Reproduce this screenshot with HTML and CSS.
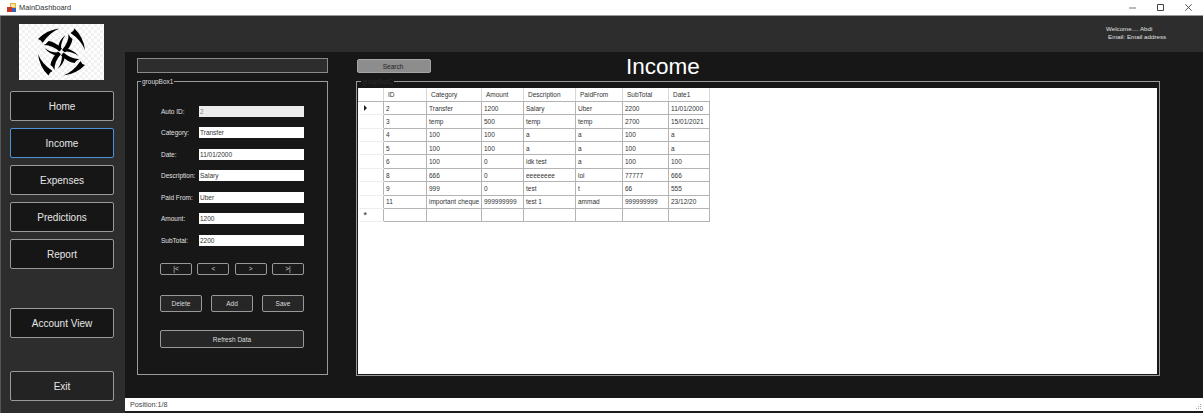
FILE: index.html
```html
<!doctype html>
<html>
	<head>
		<title>MainDashboard</title>
		<meta charset="utf-8" />
		<link rel="stylesheet" href="styles.css">
	</head>

	<body>
		<div class="titlebar">
			<svg class="app-icon" width="10" height="10" viewBox="0 0 10 10">
				<rect x="3" y="0" width="6" height="5" fill="#e8b23a"/>
				<rect x="4" y="1" width="4" height="3" fill="#f7e7a8"/>
				<rect x="0" y="4" width="5" height="5" fill="#c8362a"/>
				<rect x="5" y="5" width="4" height="4" fill="#3a62b8"/>
			</svg>
			<span class="title-text">MainDashboard</span>
			<div class="controls">
				<svg width="7" height="7" viewBox="0 0 7 7"><path d="M0 4H7" stroke="#777" fill="none"/></svg>
				<svg width="7" height="7" viewBox="0 0 7 7"><path d="M.5 .5H6.5V6.5H.5Z" stroke="#444" fill="none"/></svg>
				<svg width="7" height="7" viewBox="0 0 7 7"><path d="M.3 .3L6.7 6.7M6.7 .3L.3 6.7" stroke="#444" stroke-width=".9" fill="none"/></svg>
			</div>
		</div>

		<div class="window">
			<div class="sidebar">
				<div class="logo">
					<svg width="85" height="56" viewBox="-42.5 -28 85 56">
						<defs>
							<g id="blade">
								<path d="M-23.5 -13 Q-15 -22 -2 -23.5 Q-12 -19.5 -19 -9 Q-20 -12 -23.5 -13Z"/>
								<path d="M-18 -7 Q-10 -7.5 -2 -.5 L.5 -3.5 Q-6 -10 -13 -11 Q-15 -8 -18 -7Z"/>
								<path d="M4 -17 Q-2.5 -12 -3.5 -4 L-.5 -4 Q-.5 -11 4 -17Z"/>
							</g>
						</defs>
						<use href="#blade"/>
						<use href="#blade" transform="rotate(90)"/>
						<use href="#blade" transform="rotate(180)"/>
						<use href="#blade" transform="rotate(270)"/>
					</svg>
				</div>
				<div class="nav">
					<button class="nav-btn">Home</button>
					<button class="nav-btn active">Income</button>
					<button class="nav-btn">Expenses</button>
					<button class="nav-btn">Predictions</button>
					<button class="nav-btn">Report</button>
					<button class="nav-btn account">Account View</button>
					<button class="nav-btn exit">Exit</button>
				</div>
			</div>

			<div class="main">
				<div class="header">
					<div class="welcome">
						<div>Welcome.... Abdi</div>
						<div class="email">Email: Email address</div>
					</div>
				</div>

				<div class="content">
					<div class="left">
						<div class="search-box"></div>
						<div class="group group1">
							<div class="legend">groupBox1</div>
							<div class="form">
								<div class="row"><label>Auto ID:</label><div class="field disabled">2</div></div>
								<div class="row"><label>Category:</label><div class="field">Transfer</div></div>
								<div class="row"><label>Date:</label><div class="field">11/01/2000</div></div>
								<div class="row"><label>Description:</label><div class="field">Salary</div></div>
								<div class="row"><label>Paid From:</label><div class="field">Uber</div></div>
								<div class="row"><label>Amount:</label><div class="field">1200</div></div>
								<div class="row"><label>SubTotal:</label><div class="field">2200</div></div>
							</div>
							<div class="pager">
								<button class="btn">|&lt;</button>
								<button class="btn">&lt;</button>
								<button class="btn">&gt;</button>
								<button class="btn">&gt;|</button>
							</div>
							<div class="actions">
								<button class="btn">Delete</button>
								<button class="btn">Add</button>
								<button class="btn">Save</button>
							</div>
							<button class="btn refresh">Refresh Data</button>
						</div>
					</div>

					<div class="right">
						<div class="topline">
							<button class="search-btn">Search</button>
							<div class="page-title">Income</div>
						</div>
						<div class="group group2">
							<div class="legend">groupBox2</div>
							<div class="grid-area">
								<table class="grid">
									<colgroup>
										<col class="c0"><col class="c1"><col class="c2"><col class="c3"><col class="c4"><col class="c5"><col class="c6"><col class="c7">
									</colgroup>
									<tr class="head"><th></th><th>ID</th><th>Category</th><th>Amount</th><th>Description</th><th>PaidFrom</th><th>SubTotal</th><th>Date1</th></tr>
									<tr><td class="rh"><span class="arrow"></span></td><td>2</td><td>Transfer</td><td>1200</td><td>Salary</td><td>Uber</td><td>2200</td><td>11/01/2000</td></tr>
									<tr><td class="rh"></td><td>3</td><td>temp</td><td>500</td><td>temp</td><td>temp</td><td>2700</td><td>15/01/2021</td></tr>
									<tr><td class="rh"></td><td>4</td><td>100</td><td>100</td><td>a</td><td>a</td><td>100</td><td>a</td></tr>
									<tr><td class="rh"></td><td>5</td><td>100</td><td>100</td><td>a</td><td>a</td><td>100</td><td>a</td></tr>
									<tr><td class="rh"></td><td>6</td><td>100</td><td>0</td><td>idk test</td><td>a</td><td>100</td><td>100</td></tr>
									<tr><td class="rh"></td><td>8</td><td>666</td><td>0</td><td>eeeeeeee</td><td>lol</td><td>77777</td><td>666</td></tr>
									<tr><td class="rh"></td><td>9</td><td>999</td><td>0</td><td>test</td><td>t</td><td>66</td><td>555</td></tr>
									<tr><td class="rh"></td><td>11</td><td>important cheque</td><td>999999999</td><td>test 1</td><td>ammad</td><td>999999999</td><td>23/12/20</td></tr>
									<tr class="new"><td class="rh">*</td><td></td><td></td><td></td><td></td><td></td><td></td><td></td></tr>
								</table>
							</div>
						</div>
					</div>
				</div>

				<div class="status">
					<span>Position:1/8</span>
					<svg class="grip" width="8" height="8" viewBox="0 0 8 8"><path d="M6 1h1v1H6zM4 3h1v1H4zM6 3h1v1H6zM2 5h1v1H2zM4 5h1v1H4zM6 5h1v1H6z" fill="#aaa"/></svg>
				</div>
			</div>
		</div>
	</body>
</html>
```

FILE: styles.css
```css
*{
	margin:0;
	padding:0;
	box-sizing:border-box;
}

html, body{
	width:1203px;
	height:413px;
	overflow:hidden;
	background:#1c1c1c;
	font-family:"Liberation Sans", Arial, sans-serif;
}

button{
	font-family:"Liberation Sans", Arial, sans-serif;
	cursor:default;
}

/* title bar */
.titlebar{
	height:16px;
	background:#fff;
	display:flex;
	align-items:center;
	padding-left:7px;
	border-bottom:1px solid #9a9a9a;
}

.title-text{
	font-size:7.4px;
	color:#333;
	margin-left:2px;
}

.controls{
	margin-left:auto;
	display:flex;
	gap:21px;
	padding-right:11px;
}

/* window */
.window{
	display:flex;
	height:397px;
	border-left:1px solid #555;
}

.sidebar{
	width:124px;
	background:#2d2d2d;
	padding-top:8px;
}

.logo{
	width:85px;
	height:56px;
	margin-left:18px;
	background:repeating-conic-gradient(#f1f1f1 0 25%, #fff 0 50%) 0 0/6px 6px;
}

.logo svg{
	display:block;
}

.nav{
	display:flex;
	flex-direction:column;
	gap:7px;
	padding-left:9px;
	margin-top:11px;
}

.nav-btn{
	width:104px;
	height:30px;
	background:#161616;
	color:#e6e6e6;
	border:1px solid #9a9a9a;
	border-radius:2px;
	font-size:10px;
}

.nav-btn.active{
	border-color:#4b93d6;
}

.nav-btn.account{
	margin-top:32px;
}

.nav-btn.exit{
	margin-top:26px;
	background:#232323;
}

/* main */
.main{
	flex:1;
	display:flex;
	flex-direction:column;
	min-width:0;
}

.header{
	height:36px;
	background:#2d2d2d;
	display:flex;
	justify-content:flex-end;
	padding:9px 37px 0 0;
}

.welcome{
	width:60px;
	font-size:6.2px;
	line-height:8px;
	color:#e0e0e0;
	white-space:nowrap;
}

.email{
	padding-left:2px;
}

.content{
	flex:1;
	background:#171717;
	display:flex;
	padding:6px 43px 0 12px;
	gap:28px;
}

.left{
	width:191px;
}

.search-box{
	height:15px;
	background:#2d2d2d;
	border:1px solid #8a8a8a;
}

.group{
	border:1px solid #9a9a9a;
	position:relative;
}

.legend{
	display:table;
	margin:-5px 0 0 3px;
	padding:0 1px;
	height:9px;
	line-height:9px;
	background:#171717;
	font-size:6.5px;
	color:#ddd;
}

/* left form */
.group1{
	height:294px;
	margin-top:8px;
}

.form{
	display:flex;
	flex-direction:column;
	gap:10.5px;
	margin-top:19.5px;
	padding-left:23px;
}

.row{
	display:flex;
	align-items:center;
	height:11px;
}

.row label{
	width:38px;
	font-size:6.5px;
	color:#e0e0e0;
	white-space:nowrap;
}

.field{
	width:105px;
	height:11px;
	line-height:11px;
	background:#fff;
	color:#333;
	font-size:6.5px;
	padding-left:1px;
}

.field.disabled{
	background:#ececec;
	color:#888;
}

.btn{
	background:#262626;
	color:#ddd;
	border:1px solid #999;
	border-radius:2px;
	font-size:6.5px;
	display:block;
}

.pager{
	display:flex;
	justify-content:space-between;
	width:144px;
	margin:17.5px 0 0 22px;
}

.pager .btn{
	width:32px;
	height:12px;
	line-height:8px;
	background:#1a1a1a;
}

.actions{
	display:flex;
	justify-content:space-between;
	width:144px;
	margin:20px 0 0 22px;
}

.actions .btn{
	width:42px;
	height:17px;
}

.refresh{
	width:144px;
	height:18px;
	margin:18px 0 0 22px;
}

/* right side */
.right{
	width:804px;
}

.topline{
	display:flex;
	height:23px;
	padding-left:1px;
}

.search-btn{
	width:74px;
	height:14px;
	margin-top:1px;
	padding-right:2px;
	background:#8d8d8d;
	color:#222;
	border:1px solid #a5a5a5;
	border-radius:2px;
	font-size:6.5px;
}

.page-title{
	margin-left:195px;
	font-size:22.5px;
	line-height:18px;
	color:#fff;
}

.group2{
	height:295px;
	padding:0 2px 2px 1px;
}

.group2 .legend{
	color:#2a2a2a;
}

.grid-area{
	background:#fff;
	height:286px;
	margin-top:2px;
}

.grid{
	border-collapse:collapse;
	table-layout:fixed;
	width:351px;
	font-size:6.5px;
	color:#333;
}

.c0{width:25px;}
.c1{width:43px;}
.c2{width:55px;}
.c3{width:42px;}
.c4{width:52px;}
.c5{width:47px;}
.c6{width:46px;}
.c7{width:41px;}

.grid th, .grid td{
	height:13.4px;
	border:1px solid #b4b4b4;
	padding:0 0 0 2px;
	text-align:left;
	font-weight:normal;
	white-space:nowrap;
	overflow:hidden;
}

.grid th{
	padding-left:4px;
	border-top:none;
	border-left-color:#eee;
	border-right-color:#d8d8d8;
}

.grid .rh{
	background:#fff;
	border-left:none;
	border-top-color:#eee;
	border-bottom-color:#eee;
	padding-left:5px;
	font-size:9px;
	line-height:9px;
	color:#222;
}

.arrow{
	display:block;
	width:0;
	height:0;
	border-left:3px solid #222;
	border-top:3px solid transparent;
	border-bottom:3px solid transparent;
}

/* status strip */
.status{
	height:13px;
	margin-bottom:2px;
	background:#fff;
	display:flex;
	align-items:center;
	justify-content:space-between;
	padding:0 1px 0 5px;
	font-size:7.2px;
	color:#444;
}

.grip{
	align-self:flex-end;
}
```
